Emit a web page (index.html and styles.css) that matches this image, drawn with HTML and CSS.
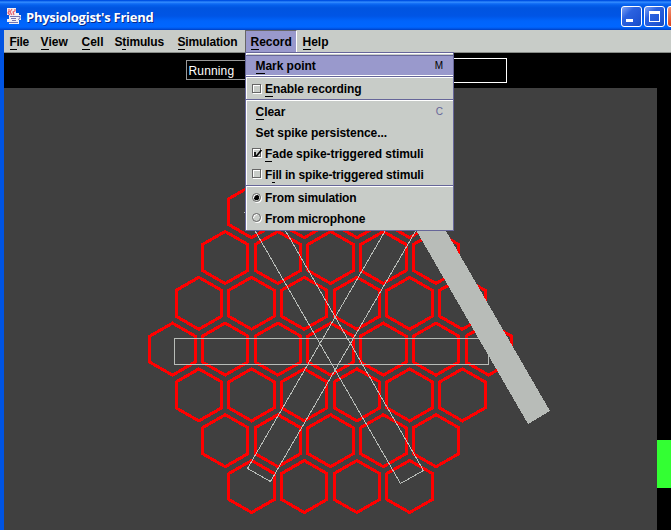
FILE: index.html
```
<!DOCTYPE html>
<html lang="en">
<head>
<meta charset="utf-8">
<title>Physiologist's Friend</title>
<link rel="stylesheet" href="styles.css">
</head>
<body>
<div class="window">
  <header class="titlebar">
    <svg class="logo" width="16" height="16" viewBox="0 0 16 16">
      <path fill="#f3f0f5" d="M1 0h9v5h3v2h2v5h-2v4H3v-2H1v-3h2V7H1z"/>
      <path fill="none" stroke="#e8606a" stroke-width="1.200" d="M3 1v2l-1 2 2 2M6 1L4 4l2 3M9 1v2L7 4l1 3"/>
      <path fill="none" stroke="#7474b0" d="M4 8.500h7M5 10.500h5M6 12.500h4M3 14.500h9M11 8.500h3v2l-2 1"/>
    </svg>
    <h1>Physiologist's Friend</h1>
    <div class="controls">
      <span class="btn"><i class="min"></i></span><span class="btn"><i class="max"></i></span><span class="btn close"></span>
    </div>
  </header>
  <div class="frame">
    <nav class="menubar">
      <span class="m file"><u>F</u>ile</span><span class="m view"><u>V</u>iew</span><span class="m cell"><u>C</u>ell</span><span class="m stim">S<u>t</u>imulus</span><span class="m sim"><u>S</u>imulation</span><span class="m record"><u>R</u>ecord</span><span class="m help"><u>H</u>elp</span>
    </nav>
    <div class="toolbar"><div class="status">Running</div><div class="field"></div></div>
    <main class="content">
      <svg class="canvas" id="canvas" width="653" height="442" viewBox="4 88 653 442" shape-rendering="crispEdges">
        <g id="cells" class="cells"></g>
        <g class="outline">
          <path d="M174.500 338.500H488.500V364.500H174.500Z"/>
          <path d="M244.500 212.500L400.500 483.500L423.500 470.500L267.500 199.500Z"/>
          <path d="M247.500 468.500L270.500 481.500L427.500 210.500L404.500 197.500Z"/>
        </g>
        <path class="bar" d="M423.500 192L550 411L528 424L394 192Z"/>
      </svg>
      <aside class="meter"><div class="level"></div></aside>
    </main>
  </div>
  <div class="menu">
    <div class="row mark"><span class="label"><u>M</u>ark point</span><kbd>M</kbd></div>
    <div class="row enable"><i class="check"></i><span class="label"><u>E</u>nable recording</span></div>
    <div class="row clear"><span class="label"><u>C</u>lear</span><kbd>C</kbd></div>
    <div class="row persist"><span class="label">Set spike persistence...</span></div>
    <div class="row fade"><i class="check"><svg width="10" height="9" viewBox="0 0 10 9"><path d="M2 3v4h1.500L8.500 1" fill="none" stroke="#000" stroke-width="1.700"/></svg></i><span class="label"><u>F</u>ade spike-triggered stimuli</span></div>
    <div class="row fill"><i class="check"></i><span class="label">F<u>i</u>ll in spike-triggered stimuli</span></div>
    <div class="row simu"><i class="radio on"></i><span class="label">From simulation</span></div>
    <div class="row micro"><i class="radio"></i><span class="label">From microphone</span></div>
  </div>
</div>
<script src="script.js"></script>
</body>
</html>
```
FILE: styles.css
```
* { box-sizing: border-box; }
body { margin: 0; overflow: hidden; background: #000; font: bold 12px/16px "Liberation Sans", Arial, sans-serif; color: #000; }
.window { position: relative; width: 671px; height: 530px; overflow: hidden; background: #0054e3; }
.titlebar { display: flex; align-items: center; height: 30px; padding: 3px 0 0 6px; white-space: nowrap; overflow: hidden;
  background: linear-gradient(#0050e0 0, #0054e8 1px, #3f97ff 2px, #1a75fa 3px, #0560ec 5px, #0054e0 8px, #0055e5 16px, #0064fb 21px, #0066ff 27px, #0050dd 29px, #003ec0 30px); }
.logo { flex: none; margin: -2px 4px 0 0; }
h1 { flex: none; width: 132px; margin: 0; font: bold 13px/16px "Open Sans", sans-serif; letter-spacing: -.25px; color: #fff; text-shadow: 1px 1px #0a2a8a; }
.controls { display: flex; gap: 2px; margin-left: 463px; flex: none; }
.btn { display: flex; width: 21px; height: 21px; border: 1px solid #fff; border-radius: 3px; background: linear-gradient(135deg, #7ea2f5, #2b62e0 35%, #1f55d5 75%, #154bc0); }
.btn.close { background: linear-gradient(135deg, #f29a7f, #e04a22 50%, #c8390f); }
.min { width: 7px; height: 3px; margin: 12px 0 0 4px; background: #fff; }
.max { width: 11px; height: 11px; margin: 4px 0 0 4px; border: 1px solid #fff; border-top-width: 3px; }
.frame { margin-left: 4px; }
.menubar { display: flex; height: 23px; background: #c8ccc8; border-bottom: 1px solid #888c88; }
.m { height: 23px; padding: 4px 0 0 5.5px; white-space: nowrap; }
u { text-decoration: none; box-shadow: 0 1px #000; display: inline-block; height: 15px; line-height: 16px; }
.file { width: 31px; letter-spacing: -.3px; } .view { width: 41px; } .cell { width: 33px; } .stim { width: 63px; letter-spacing: -.15px; } .sim { width: 73px; letter-spacing: -.15px; }
.record { width: 52px; background: #9999cc; border: 1px solid #666; border-right-color: #fff; border-bottom: 0; padding: 3px 0 0 4.5px; }
.toolbar { display: flex; height: 35px; padding: 5px 0 0 182px; background: #000; }
.status { width: 100px; height: 20px; margin-top: 2px; border: 1px solid #999; color: #fff; font-weight: normal; padding: 2px 0 0 1.5px; letter-spacing: .15px; }
.field { width: 221px; height: 25px; border: 1px solid #fff; }
.content { display: flex; height: 442px; background: #000; }
.canvas { display: block; background: #404040; flex: none; }
.cells { fill: none; stroke: red; stroke-width: 3; }
.outline { fill: none; stroke: #b8bcb8; stroke-width: 1; }
.bar { fill: #b8bcb8; }
.meter { width: 14px; padding-top: 352px; }
.level { height: 48px; background: #33ff33; }
.menu { position: absolute; left: 245px; top: 52px; width: 209px; height: 179px; border: 1px solid #666699; background: #c8ccc8; box-shadow: inset 1px 1px #fff; padding: 2px 0 0; }
.row { display: flex; align-items: center; height: 21px; padding: 0 10px 0 9.5px; white-space: nowrap; letter-spacing: -.05px; }
.mark { background: #9999cc; border-top: 1px solid #666699; border-bottom: 1px solid #fff; }
.enable, .clear, .simu { height: 23px; padding-top: 2px; border-top: 1px solid #666699; box-shadow: inset 0 1px #fff; }
.enable { letter-spacing: -.1px; }
.fill { letter-spacing: -.15px; }
.simu, .micro { letter-spacing: -.12px; }
kbd { margin-left: auto; font: 10px/12px "Liberation Sans", sans-serif; color: #666699; }
.mark kbd { color: #000; }
.check, .radio { flex: none; width: 9px; height: 9px; margin: -2px 4px 0 -3.5px; border: 1px solid #666; box-shadow: 1px 1px #fff, inset 1px 1px #fff; }
.check svg { display: block; }
.radio { border-radius: 50%; }
.on { background: radial-gradient(#000 0 2.500px, transparent 3px); }
```
FILE: script.js
```
const cells = document.getElementById("cells");
for (let row = -3; row <= 3; row++) {
  const count = 7 - Math.abs(row);
  for (let i = 0; i < count; i++) {
    const x = 330.6 + (i - (count - 1) / 2) * 52.7;
    const y = 349.1 + row * 45.8;
    const p = document.createElementNS("http://www.w3.org/2000/svg", "path");
    p.setAttribute("d", `M${x} ${y - 26}l22.700 13v26l-22.700 13l-22.700 -13v-26z`);
    cells.append(p);
  }
}
```
